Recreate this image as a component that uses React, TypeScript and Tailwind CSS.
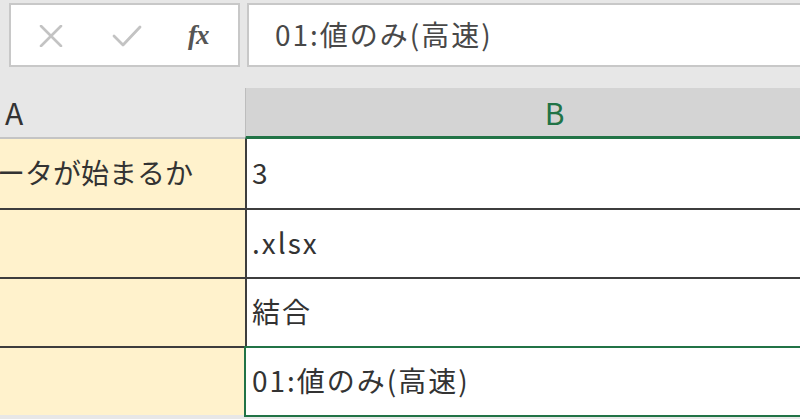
import React from "react";

const font = { fontFamily: '"Noto Sans CJK JP", "Noto Sans", sans-serif' };

const Cross = () => (
  <svg width="26" height="22" viewBox="0 0 26 22" fill="none">
    <path d="M3 1 L23 21 M23 1 L3 21" stroke="#c3c3c3" strokeWidth="2.6" strokeLinecap="round" />
  </svg>
);

const Check = () => (
  <svg width="30" height="24" viewBox="0 0 30 24" fill="none">
    <path d="M2 12 L11 21 L28 3" stroke="#c3c3c3" strokeWidth="2.8" strokeLinecap="round" strokeLinejoin="round" />
  </svg>
);

type RowProps = {
  a?: string;
  b: string;
  first?: boolean;
  selected?: boolean;
};

const Row = ({ a, b, first, selected }: RowProps) => (
  <div className={`flex h-[69px] ${first ? "" : "border-t-2 border-[#3d3d3d]"}`}>
    <div className="w-[247px] shrink-0 bg-[#fff2cc] border-r-2 border-[#3d3d3d] flex items-center pb-[3px] overflow-hidden">
      {/* A列は左にはみ出している */}
      {a && <span className="shrink-0 -ml-[31px] whitespace-nowrap text-[28px] text-[#333]">{a}</span>}
    </div>
    <div
      className={`flex-1 bg-white flex items-center pb-[3px] pl-[5px] ${
        selected ? "border-2 border-[#217346] -ml-[3px] -mt-[2px] h-[71px] pl-[6px]" : ""
      }`}
    >
      <span className="whitespace-nowrap text-[28px] tracking-[2px] text-[#333]">{b}</span>
    </div>
  </div>
);

export default function App() {
  return (
    <div className="w-[800px] h-[419px] overflow-hidden bg-[#e7e7e7]" style={font}>
      <div className="w-[900px]">
        {/* 数式バー */}
        <div className="flex pt-[3px] h-[67px] gap-[7px]">
          <div className="ml-[9px] w-[231px] h-[64px] bg-white border-2 border-[#c8c8c8] flex items-center">
            <div className="ml-[27px] mt-[1px]">
              <Cross />
            </div>
            <div className="ml-[48px] mt-[2px]">
              <Check />
            </div>
            <span
              className="ml-[46px] text-[27px] font-bold italic text-[#555] tracking-[-1px]"
              style={{ fontFamily: '"Liberation Serif", serif' }}
            >
              fx
            </span>
          </div>
          <div className="w-[600px] h-[64px] bg-white border-2 border-[#c8c8c8] flex items-center pl-[26px] pb-[2px]">
            <span className="text-[28px] text-[#484848] tracking-[2px] whitespace-nowrap">01:値のみ(高速)</span>
          </div>
        </div>

        {/* 列見出し */}
        <div className="flex mt-[21px] h-[51px]">
          <div className="w-[245px] shrink-0 border-b-2 border-[#c4c4c4] flex items-center pl-[5px]">
            <span className="text-[30px] text-[#333]">A</span>
          </div>
          <div className="w-[618px] bg-[#d4d4d4] border-l border-[#bdbdbd] border-b-[3px] border-b-[#217346] flex items-center justify-center">
            <span className="text-[30px] text-[#217346]">B</span>
          </div>
        </div>

        {/* セル */}
        <Row first a="データが始まるか" b="3" />
        <Row b=".xlsx" />
        <Row b="結合" />
        <Row b="01:値のみ(高速)" selected />
      </div>
    </div>
  );
}
